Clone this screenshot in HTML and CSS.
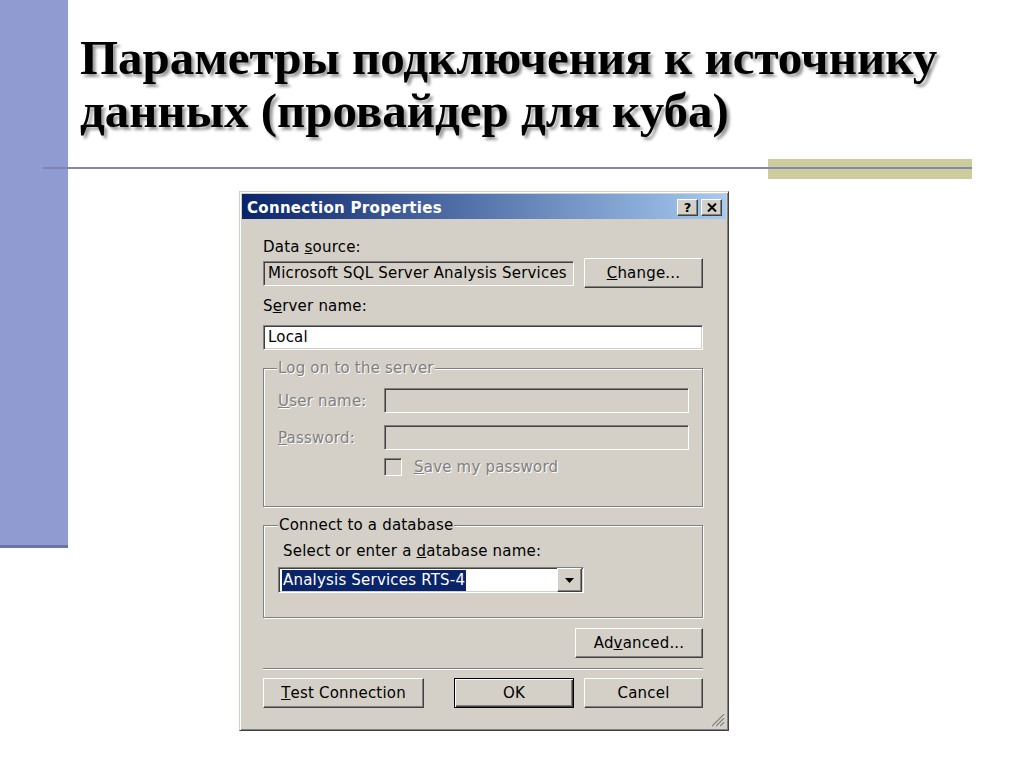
FILE: index.html
```html
<!DOCTYPE html>
<html>

<head>
    <meta charset="utf-8">
    <title>Параметры подключения к источнику данных</title>
    <link rel="stylesheet" href="styles.css">
</head>

<body>
    <div class="slide">
        <div class="side-bar"></div>
        <section class="content">
            <h1 class="title">Параметры подключения к источнику<br>данных (провайдер для куба)</h1>
            <div class="rule"></div>

            <div class="dialog">
                <div class="caption">
                    <span class="caption-text">Connection Properties</span>
                    <div class="caption-buttons">
                        <span class="caption-btn help">?</span>
                        <span class="caption-btn">
                            <svg width="10" height="9" viewBox="0 0 10 9">
                                <path d="M1 0.5 L9 8.5 M9 0.5 L1 8.5" stroke="#000" stroke-width="2" />
                            </svg>
                        </span>
                    </div>
                </div>

                <div class="dialog-body">
                    <div class="label">Data <u>s</u>ource:</div>
                    <div class="row">
                        <div class="field readonly">Microsoft SQL Server Analysis Services</div>
                        <span class="btn change"><u>C</u>hange...</span>
                    </div>

                    <div class="label server-label">S<u>e</u>rver name:</div>
                    <div class="field local">Local</div>

                    <fieldset class="group logon">
                        <legend class="disabled">Log on to the server</legend>
                        <div class="form-row">
                            <span class="form-label disabled"><u>U</u>ser name:</span>
                            <div class="field off"></div>
                        </div>
                        <div class="form-row password">
                            <span class="form-label disabled"><u>P</u>assword:</span>
                            <div class="field off"></div>
                        </div>
                        <div class="check-row">
                            <span class="checkbox"></span>
                            <span class="disabled"><u>S</u>ave my password</span>
                        </div>
                    </fieldset>

                    <fieldset class="group connect">
                        <legend>Connect to a database</legend>
                        <div class="label select-label">Select or enter a <u>d</u>atabase name:</div>
                        <div class="combo">
                            <span class="selection">Analysis Services RTS-4</span>
                            <span class="drop-btn">
                                <svg width="9" height="5" viewBox="0 0 9 5">
                                    <path d="M0 0 H9 L4.5 5 Z" fill="#000" />
                                </svg>
                            </span>
                        </div>
                    </fieldset>

                    <span class="btn advanced">Ad<u>v</u>anced...</span>
                    <div class="separator"></div>

                    <div class="button-row">
                        <span class="btn test"><u>T</u>est Connection</span>
                        <span class="btn ok">OK</span>
                        <span class="btn cancel">Cancel</span>
                    </div>
                </div>

                <svg class="grip" width="16" height="16" viewBox="0 0 16 16">
                    <path d="M15 2 L2 15 M15 6 L6 15 M15 10 L10 15" stroke="#fff" />
                    <path d="M15 3 L3 15 M15 7 L7 15 M15 11 L11 15" stroke="#808080" stroke-width="1.4" />
                </svg>
            </div>
        </section>
    </div>
</body>

</html>
```

FILE: styles.css
```css
* {
    box-sizing: border-box;
}

body {
    margin: 0;
    background: #fff;
    font-family: "DejaVu Sans", sans-serif;
}

.slide {
    display: flex;
    width: 1024px;
    height: 768px;
    overflow: hidden;
}

.side-bar {
    width: 68px;
    height: 548px;
    flex-shrink: 0;
    background: #8f9bd1;
    border-bottom: 3px solid #6b75ab;
}

.content {
    flex: 1;
    padding-top: 31px;
}

.title {
    margin: 0;
    padding-left: 12px;
    font-family: "Liberation Serif", serif;
    font-weight: bold;
    font-size: 49px;
    line-height: 53px;
    color: #000;
    text-shadow: 3px 3px 3px rgba(0, 0, 0, 0.4);
}

.rule {
    margin: 22px 0 0 -25px;
    width: 929px;
    height: 20px;
    background:
        linear-gradient(#8585b5, #8585b5) 0 8px / 100% 2px no-repeat,
        linear-gradient(#cccc9c, #cccc9c) right top / 204px 100% no-repeat;
}

/* Windows classic dialog */

.dialog {
    position: relative;
    width: 490px;
    height: 540px;
    margin: 12px 0 0 171px;
    padding: 2px;
    display: flex;
    flex-direction: column;
    background: #d4d0c8;
    border: 1px solid;
    border-color: #d4d0c8 #404040 #404040 #d4d0c8;
    box-shadow: inset 1px 1px #fff, inset -1px -1px #808080;
    font-size: 15px;
    color: #000;
}

.caption {
    height: 25px;
    display: flex;
    align-items: center;
    justify-content: space-between;
    padding: 0 4px 0 5px;
    background: linear-gradient(to right, #0a246a, #a6caf0);
}

.caption-text {
    padding-top: 3px;
    color: #fff;
    font-weight: bold;
    letter-spacing: 0.3px;
}

.caption-buttons {
    display: flex;
    gap: 3px;
    padding-top: 2px;
}

.caption-btn {
    width: 21px;
    height: 17px;
    display: flex;
    align-items: center;
    justify-content: center;
    background: #d4d0c8;
    border: 1px solid;
    border-color: #fff #404040 #404040 #fff;
    box-shadow: inset -1px -1px #808080;
}

.caption-btn.help {
    font-weight: bold;
    font-size: 13px;
    line-height: 1;
}

.dialog-body {
    display: flex;
    flex-direction: column;
    padding: 20px 23px 0 21px;
    letter-spacing: 0.2px;
}

.label {
    line-height: 17px;
}

.row {
    height: 30px;
    margin-top: 2px;
    display: flex;
    align-items: center;
    justify-content: space-between;
}

.field {
    height: 25px;
    line-height: 23px;
    padding: 0 4px;
    background: #fff;
    border: 1px solid;
    border-color: #808080 #fff #fff #808080;
    box-shadow: inset 1px 1px #404040, inset -1px -1px #d4d0c8;
    white-space: nowrap;
}

.field.readonly {
    width: 311px;
    background: #d4d0c8;
}

.field.off {
    width: 306px;
    background: #d4d0c8;
}

.server-label {
    margin-top: 10px;
}

.field.local {
    margin-top: 10px;
}

.btn {
    height: 30px;
    display: flex;
    align-items: center;
    justify-content: center;
    background: #d4d0c8;
    border: 1px solid;
    border-color: #fff #404040 #404040 #fff;
    box-shadow: inset -1px -1px #808080;
}

.btn.change {
    width: 119px;
}

.disabled {
    color: #808080;
    text-shadow: 1px 1px #fff;
}

.group {
    margin: 10px 0 0;
    min-width: 0;
    border: 1px solid #808080;
    box-shadow: 1px 1px #fff, inset 1px 1px #fff;
}

.group legend {
    padding: 0 1px;
    line-height: 17px;
    background: #d4d0c8;
}

.group.logon {
    padding: 11px 13px 30px;
}

.form-row {
    height: 25px;
    display: flex;
    align-items: center;
}

.form-row.password {
    margin-top: 12px;
}

.form-label {
    width: 107px;
    padding-left: 1px;
}

.check-row {
    height: 18px;
    margin-top: 8px;
    padding-left: 107px;
    display: flex;
    align-items: center;
    gap: 12px;
}

.checkbox {
    width: 18px;
    height: 18px;
    background: #d4d0c8;
    border: 1px solid;
    border-color: #808080 #fff #fff #808080;
    box-shadow: inset 1px 1px #404040, inset -1px -1px #d4d0c8;
}

.group.connect {
    padding: 9px 14px 24px;
}

.select-label {
    padding-left: 5px;
}

.combo {
    width: 306px;
    height: 26px;
    margin-top: 7px;
    padding: 0 1px 0 2px;
    display: flex;
    align-items: center;
    justify-content: space-between;
    background: #fff;
    border: 1px solid;
    border-color: #808080 #fff #fff #808080;
    box-shadow: inset 1px 1px #404040, inset -1px -1px #d4d0c8;
}

.selection {
    margin-left: 1px;
    padding: 0 1px;
    line-height: 21px;
    background: #0a246a;
    color: #fff;
}

.drop-btn {
    width: 25px;
    height: 24px;
    display: flex;
    align-items: center;
    justify-content: center;
    background: #d4d0c8;
    border: 1px solid;
    border-color: #fff #404040 #404040 #fff;
    box-shadow: inset -1px -1px #808080;
}

.btn.advanced {
    width: 128px;
    margin-top: 10px;
    align-self: flex-end;
}

.separator {
    height: 2px;
    margin-top: 10px;
    border-top: 1px solid #808080;
    border-bottom: 1px solid #fff;
}

.button-row {
    margin-top: 8px;
    display: flex;
}

.btn.test {
    width: 161px;
}

.btn.ok {
    width: 120px;
    margin: 0 10px 0 auto;
    border-color: #000;
    box-shadow: inset 1px 1px #fff, inset -1px -1px #404040, inset -2px -2px #808080;
}

.btn.cancel {
    width: 119px;
}

.grip {
    position: absolute;
    right: 3px;
    bottom: 3px;
}
```
